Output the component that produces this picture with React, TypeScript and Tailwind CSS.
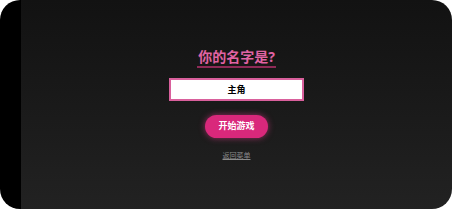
import { useState } from 'react'

export default function App() {
  const [name, setName] = useState('主角')

  return (
    <div className="h-[209px] w-[452px] bg-white p-0">
      <div className="flex h-full w-full overflow-hidden rounded-[20px] font-['Noto_Sans','Noto_Sans_CJK_SC',sans-serif]">
        <div className="w-[21px] shrink-0 bg-black" />
        <main className="flex flex-1 flex-col items-center justify-center bg-gradient-to-b from-[#121212] to-[#222222] pb-[2px]">
          <h1 className="border-b-2 border-[#8e2a57] px-[1px] pb-[1px] text-[14px] leading-[17px] font-bold text-[#e063a3]">
            你的名字是?
          </h1>
          <input
            value={name}
            onChange={(e) => setName(e.target.value)}
            className="mt-[10px] h-[23px] w-[135px] border-2 border-[#d9609c] bg-white text-center text-[9px] font-bold text-black outline-none"
          />
          <button className="mt-[14px] h-[23px] w-[63px] rounded-full bg-[#d9287b] text-[9px] font-bold text-white shadow-[0_0_6px_rgba(230,60,140,0.6)]">
            开始游戏
          </button>
          <a href="#" className="mt-[13px] text-[7px] leading-[9px] text-[#8a8a8a] underline">
            返回菜单
          </a>
        </main>
      </div>
    </div>
  )
}
